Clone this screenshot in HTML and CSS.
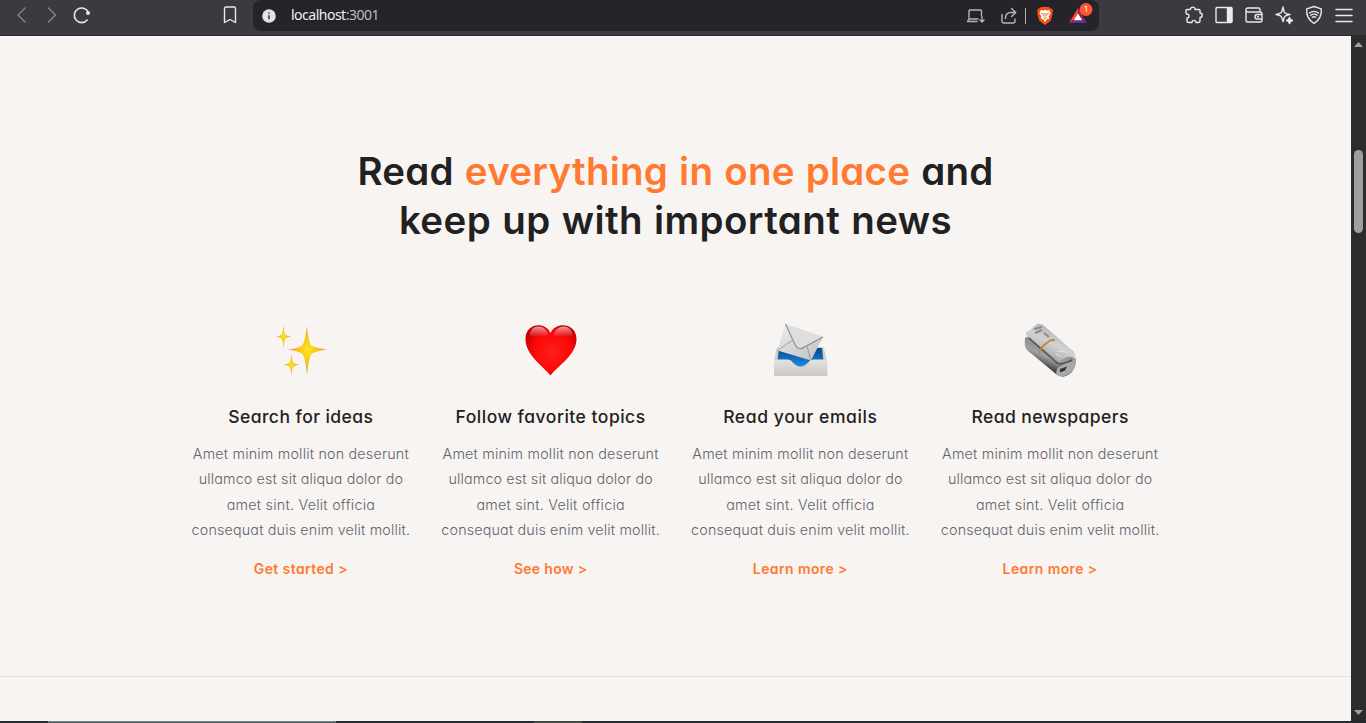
FILE: index.html
```
<!DOCTYPE html>
<html lang="en">
<head>
<meta charset="utf-8">
<title>Read everything in one place</title>
<link rel="stylesheet" href="styles.css">
</head>
<body>
<header class="toolbar">
  <nav class="nav">
    <svg class="icon dim" viewBox="0 0 20 20"><path d="M13 3 6 10l7 7"/></svg>
    <svg class="icon dim" viewBox="0 0 20 20"><path d="m6.500 3 7 7-7 7"/></svg>
    <svg class="icon bold" viewBox="0 0 20 20"><path d="M16.300 7.300A7.300 7.300 0 1 0 15.200 15"/><circle cx="16" cy="8" r="2" fill="currentColor" stroke="none"/></svg>
  </nav>
  <svg class="icon bookmark" viewBox="0 0 20 20"><path d="M4.500 3.500q0-1.500 1.500-1.500h8q1.500 0 1.500 1.500v14L10 14.500l-5.500 3z"/></svg>
  <div class="address">
    <svg class="info" viewBox="0 0 14 14"><circle cx="7" cy="7" r="6.800" fill="#e4e2e8"/><path d="M7 6.200v4M7 3.500v1.300" stroke="#25242a" stroke-width="1.400"/></svg>
    <span class="url">localhost<span class="port">:3001</span></span>
    <div class="address-tools">
      <svg class="icon soft" viewBox="0 0 20 20"><path d="M12 15.500H2.500L4 13V5q0-1 1-1h10.500q1 0 1 1v4.500M4 13h9M17 10.500v5.500m-2-2 2 2 2-2"/></svg>
      <svg class="icon soft share" viewBox="0 0 20 20"><path d="M3 8.500V15q0 2 2 2h9q2 0 2-2v-2M6.500 12.500q0-6 5.500-6h4.500M12.500 2.500l4.300 4-4.300 4"/></svg>
      <span class="divider"></span>
      <svg class="lion" viewBox="0 0 16 18"><path d="M4 0h8l1.300 1.500h1.500L16 4l-.7 1.500.4 1.500L13.500 14 8 18l-5.500-4L.3 7l.4-1.500L0 4l1.200-2.500h1.500z" fill="#f9500f"/><path d="m4 3 2 .5 2-.4 2 .4 2-.5 1.700 3-2 3.500.5 2-3 1.200-.2 1.300L8 15l-1-1-.2-1.300-3-1.200.5-2-2-3.500z" fill="#fff"/><path d="m4.200 6.200 2.400 1-.6 1.500M11.800 6.200l-2.400 1 .6 1.500M8 6v4m-1.500.5L8 11.700l1.500-1.200" fill="none" stroke="#f9500f" stroke-width=".9"/></svg>
      <svg class="bat" viewBox="0 0 26 22"><path d="M10 6 1 21l9-6z" fill="#ff4724"/><path d="m10 6 9 15-9-6z" fill="#9e1f63"/><path d="M1 21h18l-9-6z" fill="#662d91"/><path d="m10 11.500 4.200 6.700H5.800z" fill="#fff"/><circle cx="18" cy="7.500" r="6.500" fill="#ff5630"/><text x="18" y="10.300" text-anchor="middle" class="badge">1</text></svg>
    </div>
  </div>
  <div class="actions">
    <svg class="icon" viewBox="0 0 20 20"><path d="M3 4.500h3.500c-.5-3.200 5-3.200 4.500 0h4q1 0 1 1V8c3 .2 3 4.500 0 4.500V16q0 1.500-1.500 1.500H12c.2-2.800-4-2.800-4 0H4.500Q3 17.500 3 16v-3c2.600 0 2.600-4 0-4-.7 0-1-.5-1-1V5.500q0-1 1-1z"/></svg>
    <svg class="icon" viewBox="0 0 20 20"><rect x="2" y="2.500" width="16" height="15" rx="1"/><path d="M13.500 3h4v14h-4z" fill="currentColor"/></svg>
    <svg class="icon" viewBox="0 0 20 20"><path d="M16 6.500V4.500Q16 3 14.500 3H4Q2 3 2 5t2 2h12q2 0 2 2v6.500q0 1.500-1.500 1.500h-13Q2 17 2 15.500V5M18 9.500h-5q-2 0-2 2.200T13 14h5M13.500 11.800h1"/></svg>
    <svg class="icon" viewBox="0 0 20 20"><path d="M9 2q1 5.500 2 6 1 .8 5 1.500-4 .7-5 1.700T9 16.500q-1-4.300-2-5.300T2 9.500q4-.7 5-1.700T9 2z"/><path d="M15.500 12.500q.5 2.500 3 3-2.500.5-3 3-.5-2.500-3-3 2.500-.5 3-3z" fill="currentColor"/></svg>
    <svg class="icon" viewBox="0 0 20 20"><path d="m10 1.500 7.300 2.300q.7 10-7.300 14.700Q2 13.800 2.700 3.800zM5.500 8q4.500-3.300 9 0M6.800 10.300q3.200-2.300 6.400 0M8.300 12.300q1.700-1.200 3.400 0"/></svg>
    <svg class="icon menu" viewBox="0 0 20 20"><path d="M2 4.500h16M2 10.500h16M2 16.500h16"/></svg>
  </div>
</header>
<div class="viewport">
  <main class="page">
    <section class="features">
      <h1 class="headline"><span class="line h-one">Read <em>everything in one place</em> and</span><span class="line h-two">keep up with important news</span></h1>
      <div class="grid">
        <article class="card">
          <svg class="emoji" viewBox="0 0 60 60">
            <defs><radialGradient id="gold"><stop offset="0" stop-color="#ffe22b"/><stop offset=".4" stop-color="#fbc915"/><stop offset="1" stop-color="#ee9a54"/></radialGradient></defs>
            <g fill="url(#gold)"><path d="M36 5.500q1.500 19 5 20.500t15 3.500q-13 2-15.500 4.500T36 55q-2-18.500-4.500-21T17 29.500q11-1.500 14-4T36 5.500z"/><path d="M12.500 5q.7 8.500 2 9.700t5.500 2q-4.200.7-5.500 2t-2 9.300q-.7-8-2-9.300t-5.500-2q4.200-.8 5.500-2t2-9.700z"/><path d="M20.500 34q.7 7.500 2 8.700t5.500 2q-4.200.7-5.500 2T20.500 56q-.7-8-2-9.300t-6-2q4.700-.8 6-2t2-8.700z"/></g>
          </svg>
          <h2 class="title t-one">Search for ideas</h2>
          <p class="copy"><span class="line c-one">Amet minim mollit non deserunt</span><span class="line c-two">ullamco est sit aliqua dolor do</span><span class="line c-three">amet sint. Velit officia</span><span class="line c-four">consequat duis enim velit mollit.</span></p>
          <a class="link">Get started &gt;</a>
        </article>
        <article class="card">
          <svg class="emoji" viewBox="0 0 60 60">
            <defs><radialGradient id="red" cx=".52" cy=".55" r=".58"><stop offset="0" stop-color="#ff2019"/><stop offset=".65" stop-color="#fb0808"/><stop offset="1" stop-color="#c90000"/></radialGradient><linearGradient id="shine" x2="0" y2="1"><stop stop-color="#fff" stop-opacity=".6"/><stop offset="1" stop-color="#fff" stop-opacity="0"/></linearGradient></defs>
            <path d="M29.500 55.500C22 46 4.500 35 4.500 19 4.500 3 24 1 29.500 13 35 1 55.500 3 55.500 19c0 16-19 27-26 36.500z" fill="url(#red)"/>
            <path d="M8 17Q9 7 17 6.500T27.500 15q-9 3-19.500 2zM32 15q3-8.500 11-8.500T52 17q-11 1-20-2z" fill="url(#shine)"/>
          </svg>
          <h2 class="title t-two">Follow favorite topics</h2>
          <p class="copy"><span class="line c-one">Amet minim mollit non deserunt</span><span class="line c-two">ullamco est sit aliqua dolor do</span><span class="line c-three">amet sint. Velit officia</span><span class="line c-four">consequat duis enim velit mollit.</span></p>
          <a class="link l-two">See how &gt;</a>
        </article>
        <article class="card">
          <svg class="emoji" viewBox="0 0 60 60">
            <defs><linearGradient id="blue" x2="0" y2="1"><stop stop-color="#06478c"/><stop offset="1" stop-color="#2297f2"/></linearGradient><linearGradient id="paper" x2="1" y2="1"><stop stop-color="#ededed"/><stop offset="1" stop-color="#bfbfc2"/></linearGradient><linearGradient id="tray" x2="0" y2="1"><stop stop-color="#e5e3df"/><stop offset="1" stop-color="#c9c7c3"/></linearGradient></defs>
            <path d="M7 27h46.500L57 41v7H4v-7z" fill="#d1cfcc"/><path d="M9 28h43l1.500 13L45 50H15L7.500 40z" fill="url(#blue)"/>
            <path d="M15.500 4 53 17 41 40.500 7.500 30.500z" fill="url(#paper)"/><path d="M7.500 30.500 22 20.500M41 40.500l-4-14" stroke="#999b9f" fill="none"/><path d="m15.500 4 9.500 20.500q3.500 6.500 8.500 3L53 17" fill="#dededf" stroke="#888c91" stroke-width="1.100"/>
            <path d="M4.500 39.500H17q4 0 5.500 2.800 8 8.500 16 0Q40 39.500 44 39.500h12.500q.8 0 .8 1V55q0 1-1 1H5q-1 0-1-1V40.500q0-1 .5-1z" fill="url(#tray)"/>
          </svg>
          <h2 class="title t-three">Read your emails</h2>
          <p class="copy"><span class="line c-one">Amet minim mollit non deserunt</span><span class="line c-two">ullamco est sit aliqua dolor do</span><span class="line c-three">amet sint. Velit officia</span><span class="line c-four">consequat duis enim velit mollit.</span></p>
          <a class="link">Learn more &gt;</a>
        </article>
        <article class="card">
          <svg class="emoji" viewBox="0 0 60 60">
            <defs><linearGradient id="roll" x1=".6" y1=".3" x2=".35" y2=".75"><stop stop-color="#8a8a8a"/><stop offset=".5" stop-color="#a2a2a2"/><stop offset="1" stop-color="#3f3f3f"/></linearGradient><linearGradient id="sheet" x1=".7" y1=".2" x2=".3" y2=".8"><stop stop-color="#b5b5b5"/><stop offset=".5" stop-color="#d2d2d2"/><stop offset="1" stop-color="#aaa"/></linearGradient></defs>
            <path d="M5 18q2-2 6-1l39 19q7 2 6 7-2 11-12 13.500-4 .5-8-2.500L7 30q-3-3-2-12z" fill="url(#roll)"/>
            <path d="M5.500 12.500 10 10l7-6q5-1 8 2.500l25 22q6 3 5 9-9-2-16 4L8 17z" fill="url(#sheet)"/>
            <path d="m9 18 28 25q5 2 15-3" fill="none" stroke="#4b4b4b" stroke-width="1.400"/>
            <path d="m14 9 8-2M15 13l7-3M24 13l5 4" stroke="#8a8a8a" stroke-width="2"/><path d="m37 31 10 1M36 34l5 3" stroke="#e3e3e3"/>
            <path d="M36 54q0-8 9-10 8-1 11-7 1 13-10 18.500-6 2.500-10-1.500z" fill="#a9a9a9"/><path d="m40 49 7-2.500-2 4-5 2z" fill="#333"/><path d="M39 46q7-4 13-5" stroke="#666" fill="none"/>
            <path d="M19.500 34.500q-.5-6 6.500-11 5-4.500 9-3.500" fill="none" stroke="#b98536" stroke-width="1.800"/>
          </svg>
          <h2 class="title t-four">Read newspapers</h2>
          <p class="copy"><span class="line c-one">Amet minim mollit non deserunt</span><span class="line c-two">ullamco est sit aliqua dolor do</span><span class="line c-three">amet sint. Velit officia</span><span class="line c-four">consequat duis enim velit mollit.</span></p>
          <a class="link">Learn more &gt;</a>
        </article>
      </div>
    </section>
  </main>
  <aside class="scrollbar">
    <svg class="arrow" viewBox="0 0 9 5"><path d="M4.500 0 9 5H0z"/></svg>
    <span class="thumb"></span>
    <svg class="arrow" viewBox="0 0 9 5"><path d="M4.500 5 9 0H0z"/></svg>
  </aside>
</div>
<footer class="edge"><span class="edge-main"></span><span class="edge-small"></span></footer>
</body>
</html>
```
FILE: styles.css
```
* { box-sizing: border-box; }
body { margin: 0; height: 723px; overflow: hidden; display: flex; flex-direction: column; background: #f8f4f1; font-family: Inter, "Open Sans", sans-serif; }
.toolbar { height: 36px; flex: none; display: flex; background: #3b3a3f; border-bottom: 1px solid #2c2b30; }
.icon { width: 20px; height: 20px; flex: none; fill: none; stroke: currentColor; stroke-width: 1.4; stroke-linecap: round; stroke-linejoin: round; color: #e9e8ed; }
.dim { color: #85848a; }
.bold { stroke-width: 1.6; }
.soft { color: #b5b4ba; }
.nav { display: flex; gap: 10px; padding: 5px 0 0 12px; width: 220px; }
.bookmark { margin-top: 5px; }
.address { display: flex; align-items: center; width: 846px; height: 31px; margin-left: 13px; padding-left: 9px; border-radius: 8px; background: #25242a; }
.info { width: 14px; height: 14px; }
.url { margin: -2px 0 0 15px; font: 14px/20px "Noto Sans", sans-serif; letter-spacing: -.5px; color: #f0eff4; }
.port { color: #bdbcc3; }
.address-tools { display: flex; align-items: center; margin-left: auto; }
.share { margin-left: 14px; }
.divider { width: 1px; height: 16px; margin-left: 6px; background: #b5b4ba; }
.lion { width: 16px; height: 18px; margin-left: 11px; }
.bat { width: 26px; height: 22px; margin: -3px 5px 3px 15px; align-self: flex-start; }
.badge { font: 8px Inter, sans-serif; fill: #fff; }
.actions { display: flex; gap: 10px; padding: 5px 0 0 85px; }
.menu { stroke-width: 1.6; }
.viewport { display: flex; height: 685px; flex: none; }
.page { flex: 1; }
.features { height: 641px; padding-top: 111px; border-bottom: 1px solid #e4e0dd; }
.line { display: block; white-space: nowrap; }
.headline { margin: 0; font-size: 38.5px; line-height: 49px; font-weight: 600; text-align: center; color: #212121; font-feature-settings: "cv11"; }
.headline em { font-style: normal; color: #ff7a30; }
.h-one { letter-spacing: .25px; word-spacing: 1px; }
.h-two { letter-spacing: .4px; word-spacing: 1px; }
.grid { display: grid; grid-template-columns: repeat(4, 249.75px); justify-content: center; padding-top: 75px; }
.card { display: flex; flex-direction: column; align-items: center; text-align: center; font-feature-settings: "cv11"; }
.emoji { width: 60px; height: 60px; }
.title { margin: 24px 0 0; font-size: 17.5px; line-height: 26px; font-weight: 500; color: #212121; white-space: nowrap; }
.t-one { letter-spacing: .45px; }
.t-two { letter-spacing: .5px; }
.t-three { letter-spacing: .6px; }
.t-four { letter-spacing: .42px; }
.copy { margin: 11px 0 0; font-size: 14.3px; line-height: 25.400px; font-weight: 300; color: #5f636e; }
.c-one { letter-spacing: .2px; }
.c-two { letter-spacing: .15px; }
.c-three { letter-spacing: .25px; }
.c-four { letter-spacing: .17px; }
.link { margin-top: 13px; font-size: 14px; line-height: 26px; font-weight: 600; letter-spacing: .4px; color: #ff7a30; white-space: nowrap; }
.l-two { letter-spacing: .3px; }
.scrollbar { width: 15px; display: flex; flex-direction: column; align-items: center; padding: 6px 0; background: #2c2c2c; }
.arrow { width: 9px; height: 5px; fill: #a0a0a0; flex: none; }
.thumb { width: 9px; height: 83px; margin: 103px 0 auto; border-radius: 5px; background: #9f9f9f; }
.edge { height: 2px; flex: none; display: flex; background: #252b2d; }
.edge-main { width: 288px; margin-left: 48px; border: 1px solid #7b8585; border-bottom-color: #4d595a; }
.edge-small { width: 48px; margin-left: 198px; background: #444b43; }
```
